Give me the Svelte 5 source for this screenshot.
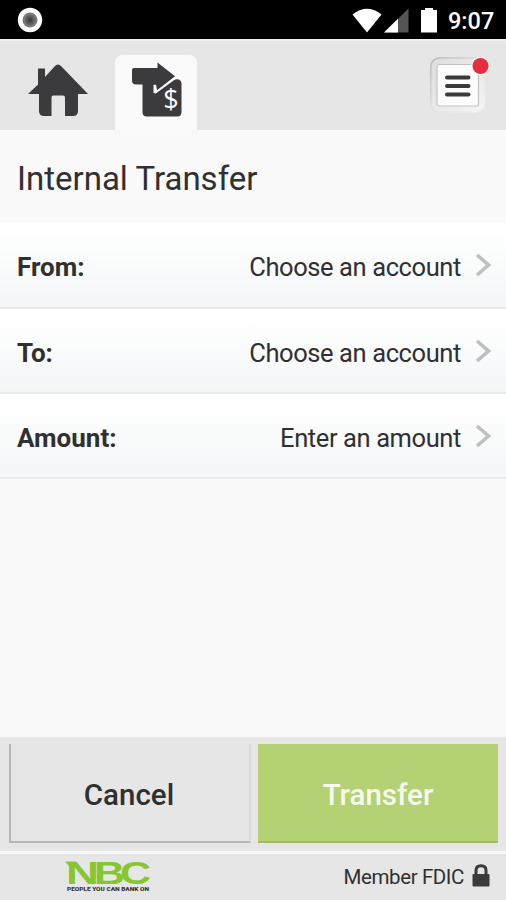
<script lang="ts">
/**
 * Internal transfer screen
 * Status bar, tab header, transfer fields and the footer actions.
 */

type Field = { label: string; value: string };

const fields: Field[] = [
  { label: 'From:', value: 'Choose an account' },
  { label: 'To:', value: 'Choose an account' },
  { label: 'Amount:', value: 'Enter an amount' },
];
</script>

<div class="screen">
  <div class="status-bar">
    <svg class="record" width="26" height="26" viewBox="0 0 26 26">
      <circle cx="13" cy="13" r="12.2" fill="#fff" />
      <circle cx="13" cy="13" r="7.5" fill="#777" />
      <circle cx="13" cy="13" r="4.8" fill="#5c5c5c" />
      <circle cx="13" cy="13" r="2.4" fill="#444" />
    </svg>
    <svg class="signals" width="87" height="26" viewBox="0 0 87 26">
      <path d="M0.5 6.500Q15-5 29.500 6.500L15 24.500Z" fill="#fff" />
      <path d="M32 24.500L56.500 0.500V24.500Z" fill="#555" />
      <path d="M32 24.500L46 10.800V24.500Z" fill="#fff" />
      <path d="M69 2H73V0H81V2H85V24.500H69Z" fill="#fff" />
    </svg>
    <span class="time">9:07</span>
  </div>

  <header class="tabs">
    <button class="tab home" aria-label="Home">
      <svg width="60" height="54" viewBox="0 0 60 54">
        <path
          d="M0 31L10 21.500V5.500H17V14L27 3Q30 0 33 3L60 31H50V48Q50 53 45 53H37V34.500Q37 32.500 35 32.500H25.500Q23.500 32.500 23.500 34.500V53H16Q11 53 11 48V31Z"
          fill="#3b3b3d"
        />
      </svg>
    </button>
    <button class="tab active" aria-label="Transfer">
      <svg width="52" height="56" viewBox="0 0 52 56">
        <path
          d="M10.500 22H30L43 17.500Q49.500 16.500 49.500 22V50Q49.500 54.500 45 54.500H15Q10.500 54.500 10.500 50Z"
          fill="#3b3b3d"
        />
        <path d="M21.500 22.500H28L43 13.500L45 16L23.800 31.500L21.500 31Z" fill="#fafafa" />
        <path
          d="M0 8Q0 6 2 6H25.500V0.500L43 14.300L25 28.200L24 22.500H4Q0 22.500 0 18.500Z"
          fill="#3b3b3d"
        />
        <text x="39" y="47" class="dollar" text-anchor="middle">$</text>
      </svg>
    </button>
    <button class="menu" aria-label="Menu">
      <svg width="62" height="60" viewBox="0 0 62 60">
        <defs>
          <linearGradient id="bezel" x1="0" y1="0" x2="1" y2="1">
            <stop offset="0" stop-color="#dedede" />
            <stop offset="0.6" stop-color="#ebebeb" />
            <stop offset="1" stop-color="#f4f4f4" />
          </linearGradient>
          <linearGradient id="bezel-edge" x1="0" y1="0" x2="1" y2="1">
            <stop offset="0" stop-color="#bdbdbd" />
            <stop offset="0.5" stop-color="#e2e2e2" />
            <stop offset="1" stop-color="#f4f4f4" />
          </linearGradient>
        </defs>
        <rect x="1.800" y="1.800" width="53.500" height="54" rx="9" fill="url(#bezel)" stroke="url(#bezel-edge)" stroke-width="1.800" />
        <rect x="8" y="8.500" width="41.500" height="41.500" rx="2" fill="#fbfbfb" stroke="#c3c3c3" stroke-width="1.200" />
        <path d="M18 21.500H39.500M18 30H39.500M18 38.500H39.500" stroke="#3a3a3a" stroke-width="4" stroke-linecap="round" />
        <circle cx="51.500" cy="10" r="9.300" fill="#f6f6f6" />
        <circle cx="51.500" cy="10" r="8" fill="#e52f3d" />
      </svg>
    </button>
  </header>

  <h1>Internal Transfer</h1>

  <div class="fields">
    {#each fields as field}
      <button class="field">
        <span class="label">{field.label}</span>
        <span class="value">{field.value}</span>
        <svg width="17" height="24" viewBox="0 0 17 24">
          <path d="M2 2L13.500 12L2 22" fill="none" stroke="#bfbfbf" stroke-width="3.600" />
        </svg>
      </button>
    {/each}
  </div>

  <div class="actions">
    <button class="btn cancel">Cancel</button>
    <button class="btn transfer">Transfer</button>
  </div>

  <footer>
    <svg class="logo" width="88" height="44" viewBox="0 0 88 44">
      <path d="M1 7.500H12L9 12H5Z" fill="#87c531" />
      <g class="brand">
        <text x="2" y="29.500" textLength="33" lengthAdjust="spacingAndGlyphs">N</text>
        <text x="30" y="29.500" textLength="31" lengthAdjust="spacingAndGlyphs">B</text>
        <text x="56" y="29.500" textLength="31" lengthAdjust="spacingAndGlyphs">C</text>
      </g>
      <text class="tagline" x="3" y="36.500" textLength="82" lengthAdjust="spacingAndGlyphs">PEOPLE YOU CAN BANK ON</text>
    </svg>
    <span class="member">Member FDIC</span>
    <svg class="lock" width="18" height="23" viewBox="0 0 18 23">
      <path d="M4 11V6.500Q4 1.800 9 1.800T14 6.500V11" fill="none" stroke="#3b3b3b" stroke-width="3" />
      <rect x="0.500" y="10" width="17" height="12.500" rx="1" fill="#3b3b3b" />
    </svg>
  </footer>
</div>

<style>
  :global(body) {
    margin: 0;
  }

  .screen {
    display: flex;
    flex-direction: column;
    width: 506px;
    height: 900px;
    overflow: hidden;
    background: #f9f9f9;
    color: #303030;
    font-family: Roboto, 'Liberation Sans', sans-serif;
  }

  button {
    box-sizing: border-box;
    padding: 0;
    border: 0;
    background: none;
    color: inherit;
    font-family: inherit;
  }

  svg {
    display: block;
    flex: none;
  }

  .status-bar {
    display: flex;
    align-items: center;
    height: 39px;
    flex: none;
    padding: 0 12px 0 17px;
    background: #000;
    color: #fff;
  }

  .signals {
    margin-left: auto;
    margin-top: 3px;
  }

  .record {
    margin-top: 1px;
  }

  .time {
    margin-left: 9px;
    margin-top: 2px;
    width: 46px;
    font-size: 23.5px;
    font-weight: 500;
    line-height: 28px;
    white-space: nowrap;
  }

  .tabs {
    display: flex;
    box-sizing: border-box;
    height: 91px;
    flex: none;
    border-top: 2px solid #efefef;
    background: #e6e6e6;
  }

  .home {
    padding: 22px 0 0 28px;
    width: 115px;
  }

  .tab {
    display: flex;
    align-items: flex-start;
  }

  .tab.active {
    width: 82px;
    height: 75px;
    margin-top: 14px;
    padding: 7px 0 0 17px;
    border-radius: 7px 7px 0 0;
    background: #fafafa;
  }

  .dollar {
    font-family: 'Open Sans', sans-serif;
    font-size: 27px;
    fill: #fafafa;
  }

  .menu {
    display: flex;
    margin-left: auto;
    padding: 15px 15px 0 0;
  }

  h1 {
    box-sizing: border-box;
    height: 92px;
    flex: none;
    margin: 0;
    padding: 30px 17px 0;
    font-size: 33px;
    font-weight: 400;
    line-height: 38px;
  }

  .fields {
    display: flex;
    flex-direction: column;
  }

  .field {
    display: flex;
    align-items: center;
    height: 85px;
    padding: 5px 14px 0 17px;
    border-bottom: 2px solid #e9ebec;
    background: linear-gradient(#fff 10%, #f4f6f7);
    font-size: 26px;
  }

  .field:first-child {
    height: 87px;
  }

  .field svg {
    margin-left: 14px;
    margin-top: -4px;
  }

  .label {
    font-weight: 700;
  }

  .value {
    margin-left: auto;
    font-size: 25.5px;
    letter-spacing: -0.4px;
  }

  .actions {
    display: flex;
    box-sizing: border-box;
    gap: 7px;
    height: 114px;
    flex: none;
    margin-top: auto;
    padding: 7px 8px 8px 9px;
    background: #e6e6e6;
  }

  .btn {
    padding-top: 4px;
    font-size: 29.5px;
    font-weight: 500;
  }

  .cancel {
    width: 242px;
    padding-right: 2px;
    border-left: 2px solid #b7b7b7;
    border-bottom: 2px solid #b7b7b7;
    border-right: 2px solid #dadada;
  }

  .transfer {
    flex: 1;
    border-bottom: 2px solid #9fbb69;
    background: #b4d273;
    color: #f7faef;
  }

  footer {
    display: flex;
    box-sizing: border-box;
    align-items: flex-start;
    height: 49px;
    flex: none;
    padding: 0 16px 0 64px;
    border-top: 3px solid #f8f8f8;
    background: #e6e6e6;
  }

  .brand {
    font-family: 'Liberation Sans', sans-serif;
    font-size: 32px;
    font-weight: 700;
    fill: #87c531;
  }

  .tagline {
    font-size: 6px;
    font-weight: 900;
    fill: #333;
  }

  .member {
    margin-left: auto;
    margin-top: 10px;
    font-size: 20.5px;
    letter-spacing: -0.4px;
    line-height: 26px;
  }

  .lock {
    margin-left: 8px;
    margin-top: 10px;
  }
</style>
